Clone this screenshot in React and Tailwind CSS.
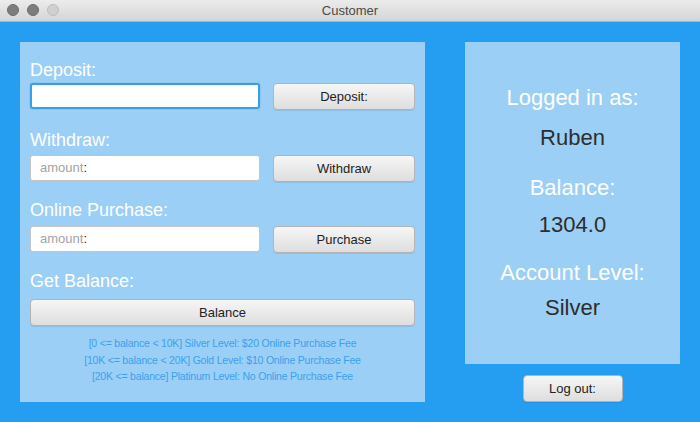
import React from "react"

// ── Bits ──────────────────────────────────────────────────────────────────────
const font = "font-['Helvetica_Neue','Liberation_Sans',Arial,sans-serif]"

const Btn = ({ children, className = "" }) => (
  <button
    className={`h-[27px] rounded-[4px] border border-[#b4b4b4] bg-gradient-to-b from-[#f6f6f6] to-[#dedede]
      text-[13px] text-[#222] shadow-[0_1px_0_rgba(0,0,0,0.08)] flex items-center justify-center ${className}`}>
    {children}
  </button>
)

const Field = ({ focused, placeholder }) => (
  <div
    className={`w-[230px] h-[26px] rounded-[3px] bg-white flex items-center px-[9px] text-[13px]
      ${focused ? "border-2 border-[#3aa0e6] shadow-[0_0_0_1px_#8cc6ef]" : "border border-[#c4c4c4]"}`}>
    {placeholder && (
      <span>
        <span className="text-[#a3a3a3]">{placeholder}</span>
        <span className="text-[#222]">:</span>
      </span>
    )}
  </div>
)

const Label = ({ children, className = "" }) => (
  <p className={`text-[18px] leading-[22px] text-white ${className}`}>{children}</p>
)

// ── Main ──────────────────────────────────────────────────────────────────────
export default function App() {
  return (
    <div className={`w-[700px] h-[422px] flex flex-col overflow-hidden ${font}`}>
      {/* Title bar */}
      <div className="h-[22px] shrink-0 relative flex items-center justify-center bg-gradient-to-b from-[#ececec] to-[#d5d5d5] border-b border-[#b3b3b3]">
        <div className="absolute left-[7px] top-[4px] flex gap-[8px]">
          <span className="w-[12px] h-[12px] rounded-full bg-[#7d7d80] border border-[#6c6c6f]" />
          <span className="w-[12px] h-[12px] rounded-full bg-[#7d7d80] border border-[#6c6c6f]" />
          <span className="w-[12px] h-[12px] rounded-full bg-[#d0d0d0] border border-[#bdbdbd]" />
        </div>
        <p className="text-[13px] text-[#4a4a4a]">Customer</p>
      </div>

      {/* Body */}
      <div className="flex-1 bg-[#259df1] flex pl-[20px] pt-[20px] gap-[40px]">
        {/* Left panel */}
        <div className="w-[405px] h-[360px] bg-[#9bcff5] px-[10px] pt-[17px] flex flex-col">
          <Label>Deposit:</Label>
          <div className="flex items-start gap-[13px] mt-[2px]">
            <Field focused />
            <Btn className="w-[142px]">Deposit:</Btn>
          </div>

          <Label className="mt-[19px]">Withdraw:</Label>
          <div className="flex items-start gap-[13px] mt-[4px]">
            <Field placeholder="amount" />
            <Btn className="w-[142px]">Withdraw</Btn>
          </div>

          <Label className="mt-[17px]">Online Purchase:</Label>
          <div className="flex items-start gap-[13px] mt-[5px]">
            <Field placeholder="amount" />
            <Btn className="w-[142px]">Purchase</Btn>
          </div>

          <Label className="mt-[17px]">Get Balance:</Label>
          <Btn className="w-full mt-[7px]">Balance</Btn>

          <div className="mt-[9px] text-center text-[10.5px] leading-[16.5px] text-[#3ba0ee] tracking-[-0.2px]">
            <p>[0 &lt;= balance &lt; 10K] Silver Level: $20 Online Purchase Fee</p>
            <p>[10K &lt;= balance &lt; 20K] Gold Level: $10 Online Purchase Fee</p>
            <p>[20K &lt;= balance] Platinum Level: No Online Purchase Fee</p>
          </div>
        </div>

        {/* Right column */}
        <div className="flex flex-col items-center">
          <div className="w-[215px] h-[322px] bg-[#9bcff5] flex flex-col items-center pt-[42px] text-[22px] leading-[28px]">
            <p className="text-white">Logged in as:</p>
            <p className="text-[#2d2d2d] mt-[12px]">Ruben</p>
            <p className="text-white mt-[22px]">Balance:</p>
            <p className="text-[#2d2d2d] mt-[9px]">1304.0</p>
            <p className="text-white mt-[20px]">Account Level:</p>
            <p className="text-[#2d2d2d] mt-[7px]">Silver</p>
          </div>
          <Btn className="w-[100px] mt-[11px]">Log out:</Btn>
        </div>
      </div>
    </div>
  )
}
